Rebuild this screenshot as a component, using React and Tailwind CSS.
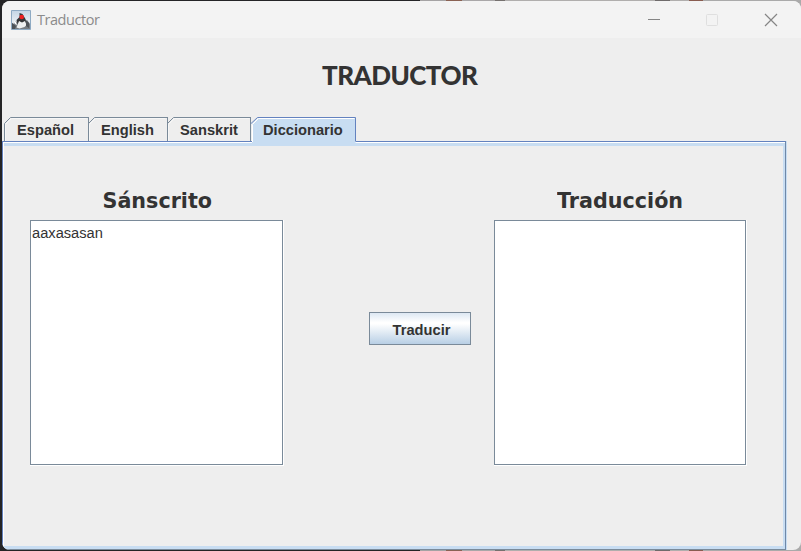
import React from "react";

const tabs = [
  { label: "Español", box: "w-[84px] pl-[13px]", width: 84 },
  { label: "English", box: "w-[79px] pl-[13px]", width: 79 },
  { label: "Sanskrit", box: "w-[84px] pl-[13px]", width: 84 },
  { label: "Diccionario", box: "w-[105px] pl-[12px]", width: 105, active: true },
];

function JavaIcon() {
  return (
    <svg width="20" height="20" viewBox="0 0 20 20">
      <defs>
        <linearGradient id="sky" x2="0" y2="1">
          <stop stopColor="#c3d5e5" />
          <stop offset=".6" stopColor="#e7edf2" />
          <stop offset="1" stopColor="#8299b4" />
        </linearGradient>
      </defs>
      <path d="M.5.5h19v19H.5z" fill="url(#sky)" stroke="#8eaac3" />
      <path d="M1 13l2 1 2-3 3 4 6-1 2-4 3 4v5H1z" fill="#777d82" />
      <path d="M8.5 3l3 1 3 5 1 4-4 2-5-1-1-4 3-3z" fill="#343638" />
      <path d="M8 11l3 1.5 3-1.5 1.500 4-2 2-5 1.500-3-1z" fill="#eef0f0" />
      <path d="M1 13l4 3-1 3H1zM15 10l3 3v5l-3-2z" fill="#4e5358" />
      <path d="M3 11l2 1 1 3-2-1z" fill="#fff" />
      <circle cx="10.700" cy="7" r="2.300" fill="#ee2020" />
    </svg>
  );
}

function Tab({ label, box, width, active }) {
  const right = width - 0.5;
  return (
    <div className={`relative h-[24px] shrink-0 pt-[1px] ${box}`}>
      <svg className="absolute left-0 top-0 overflow-visible" width={width} height="25" fill="none">
        {active ? (
          <>
            <path d={`M1 29V7L7 1H${right}V29H1z`} fill="#c8ddf2" />
            <path d={`M1.5 25V7.5l6-6H${right - 1}`} stroke="#fff" />
            <path d={`M0 6.5L6.5.5H${right}V24`} stroke="#6382bf" />
          </>
        ) : (
          <>
            <path d={`M1.5 24V7.5l6-6H${right - 1}`} stroke="#f7f7f7" />
            <path d="M.5 24V6.5l6-6" stroke="#7a8a99" />
            <path d={`M6.5.5H${width + (label === "Sanskrit" ? 0 : 1)}`} stroke="#7a8a99" />
            {label === "Sanskrit" ? (
              <path d="M83.5 0V24" stroke="#7a8a99" />
            ) : (
              <path d={`M${width + 0.5} 0V24`} stroke="#7a8a99" />
            )}
          </>
        )}
      </svg>
      <span className="relative text-[14.67px] leading-[23px] font-bold">{label}</span>
    </div>
  );
}

function Column({ title, text, box }) {
  return (
    <div className={`flex shrink-0 flex-col items-center ${box}`}>
      <h2 className="h-[35px] origin-center scale-x-[.94] pt-px font-['DejaVu_Sans',sans-serif] text-[22px] leading-[30px] font-bold whitespace-nowrap">
        {title}
      </h2>
      <div className="h-[246px] w-full border-r border-b border-white">
        <div className="h-[245px] w-full border border-[#7a8a99] bg-white pt-[4px] pl-px text-[14.67px] leading-[17px]">
          {text}
        </div>
      </div>
    </div>
  );
}

export default function App() {
  return (
    <div className="h-[551px] w-[801px] overflow-hidden bg-[linear-gradient(90deg,#242426_0_420px,#a5a3a4_420px_446px,#8a6254_446px_462px,#a9a7a8_462px_495px,#76716f_495px_505px,#b0aead_505px_655px,#6f6b6b_655px_670px,#b0aead_670px_689px,#895c50_689px_703px,#aaa_703px)] pt-px pl-[2px] font-['Liberation_Sans',Arial,sans-serif] text-[#333]">
      <main className="flex h-[549px] w-[799px] flex-col overflow-hidden rounded-[8px] bg-[#eee]">
        <header className="flex h-[37px] shrink-0 items-center bg-[#f3f3f3] pl-[9px]">
          <JavaIcon />
          <span className="ml-[6px] font-['Open_Sans',sans-serif] text-[14.5px] tracking-[-0.45px] text-[#8b8b8b]">Traductor</span>
          <svg className="mr-[2px] ml-auto" width="156" height="36" fill="none">
            <path d="M5 17.5h12" stroke="#858585" />
            <rect x="63.5" y="12.5" width="11" height="11" rx="1" stroke="#dfdfdf" />
            <path d="M122 12l12 12m0-12l-12 12" stroke="#858585" strokeWidth="1.2" />
          </svg>
        </header>
        <h1 className="h-[79px] shrink-0 origin-left pt-[19px] pl-[320px] font-['Lato',sans-serif] text-[26px] leading-[36px] font-black tracking-[-0.55px]">
          TRADUCTOR
        </h1>
        <nav className="z-10 flex h-[24px] shrink-0 pl-[2px]">
          {tabs.map((tab) => (
            <Tab key={tab.label} {...tab} />
          ))}
        </nav>
        <div className="h-[409px] w-[785px] shrink-0 border-r border-[#c8ddf2]">
          <div className="h-full border border-t-[#6382bf] border-r-[#6f88a8] border-b-[#7a8a99] border-l-[#6382bf]">
            <section className="flex h-full border-t border-l border-white">
              <div className="flex flex-1 border-t-[3px] border-r-[2px] border-b-[3px] border-[#c8ddf2] pt-[39px] pl-[26px]">
                <Column title="Sánscrito" text="aaxasasan" box="w-[254px]" />
                <button className="mt-[127px] ml-[85px] h-[33px] w-[102px] shrink-0 border border-[#7a8a99] bg-[linear-gradient(180deg,#dde8f3_0%,#fff_30%,#fff_35%,#b8cfe5_100%)] pt-[3px] pl-[3px] text-[14.67px] leading-[28px] font-bold">
                  Traducir
                </button>
                <Column title="Traducción" text="" box="ml-[23px] w-[253px]" />
              </div>
            </section>
          </div>
        </div>
      </main>
    </div>
  );
}
